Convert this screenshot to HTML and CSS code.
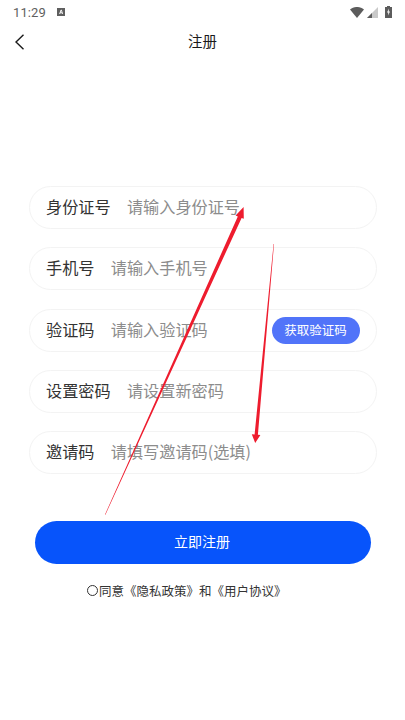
FILE: index.html
```html
<!DOCTYPE html>
<html lang="zh-CN">
<head>
<meta charset="utf-8">
<title>注册</title>
<link rel="stylesheet" href="styles.css">
</head>
<body>
<div class="page">
  <div class="status">
    <span class="time">11:29</span>
    <svg class="a-icon" viewBox="0 0 8 8"><rect width="8" height="8" fill="#5f5f5f"/><path d="M2.6 6 4 2h.4l1.2 4M3 4.8h2.2" fill="none" stroke="#fff" stroke-width=".9"/></svg>
    <span class="grow"></span>
    <svg class="wifi" viewBox="0 0 14 11"><path d="M0 2.6C4-.9 10-.9 14 2.6L7 11z" fill="#5c5c5c"/></svg>
    <svg class="signal" viewBox="0 0 11 11"><path d="M11 0v11H0z" fill="#c9c9c9"/><path d="M5 6v5H0z" fill="#5c5c5c"/></svg>
    <svg class="battery" viewBox="0 0 7 12"><path d="M2 0h3v1h2v11H0V1h2z" fill="#5c5c5c"/><path d="M4 2.5 2 6.6h1.3L3 9.6l2-4H3.7z" fill="#fff"/></svg>
  </div>
  <header class="bar">
    <svg class="back" viewBox="0 0 10 16"><path d="M9 .7 1.5 8 9 15.3" fill="none" stroke="#1a1a1a" stroke-width="1.4"/></svg>
    <h1 class="title">注册</h1>
  </header>
  <form class="form">
    <div class="row"><span class="label">身份证号</span><span class="hint">请输入身份证号</span></div>
    <div class="row"><span class="label">手机号</span><span class="hint">请输入手机号</span></div>
    <div class="row"><span class="label">验证码</span><span class="hint">请输入验证码</span><span class="code">获取验证码</span></div>
    <div class="row"><span class="label">设置密码</span><span class="hint">请设置新密码</span></div>
    <div class="row"><span class="label">邀请码</span><span class="hint">请填写邀请码(选填)</span></div>
  </form>
  <div class="submit">立即注册</div>
  <p class="agree"><span class="radio"></span>同意《隐私政策》和《用户协议》</p>
  <svg class="arrows" viewBox="0 0 405 720">
    <path d="M105 514.5 237.8 216.4 235.6 215.4 243.6 207 243.8 218.8 241.6 217.9 105.4 514.7z" fill="#ee1c2e"/>
    <path d="M274 244 257.9 434.8 260.4 435 255.2 443 251.8 434.2 254.6 434.4 273.6 244z" fill="#ee1c2e"/>
  </svg>
</div>
</body>
</html>
```
FILE: styles.css
```css
* { box-sizing: border-box; }
html, body { margin: 0; padding: 0; background: #fff; }
body { font-family: "Noto Sans CJK SC", "Noto Sans", sans-serif; text-spacing-trim: space-all; font-kerning: none; font-feature-settings: "chws" 0, "palt" 0, "halt" 0; }
.page { position: relative; width: 405px; height: 720px; overflow: hidden; }
.status { display: flex; align-items: center; height: 24px; padding: 0 13px 0 13px; color: #5f5f5f; }
.time { font: 13px/1 Roboto, sans-serif; letter-spacing: .1px; width: 44px; }
.a-icon { width: 8px; height: 8px; margin-bottom: 1px; }
.grow { flex: 1; }
.wifi { width: 14px; height: 11px; margin-right: 3px; }
.signal { width: 11px; height: 11px; margin-right: 7px; }
.battery { width: 7px; height: 12px; }
.bar { position: relative; height: 34px; display: flex; align-items: center; justify-content: center; }
.back { position: absolute; left: 14px; top: 10px; width: 11px; height: 16px; }
.title { margin: 0 0 1px 0; font-size: 14.5px; font-weight: 400; color: #1a1a1a; line-height: 34px; }
.form { display: flex; flex-direction: column; gap: 18.3px; margin: 128px 28px 0 29px; }
.row { display: flex; align-items: center; height: 43px; padding: 0 16px 3px; border: 1px solid #f3f3f3; border-radius: 22px; font-size: 16.15px; }
.label { color: #333; margin-right: 16.4px; white-space: nowrap; }
.hint { color: #8c8c8c; white-space: nowrap; flex: 1; }
.code { width: 88px; height: 27px; margin: 3px 0 0; padding-right: 1px; border-radius: 14px; background: #5174f9; color: #fff; font-size: 12.5px; line-height: 25px; text-align: center; }
.submit { margin: 46.5px 34px 0 35px; height: 43px; padding-right: 2px; border-radius: 22px; background: #0754fb; color: #fff; font-size: 14px; line-height: 41px; text-align: center; }
.agree { display: flex; align-items: center; margin: 18px 0 0 87px; font-size: 12.5px; line-height: 18px; color: #333; white-space: nowrap; }
.radio { width: 11px; height: 11px; margin-right: 1px; border: 1px solid #333; border-radius: 50%; }
.arrows { position: absolute; left: 0; top: 0; width: 405px; height: 720px; pointer-events: none; }
```
